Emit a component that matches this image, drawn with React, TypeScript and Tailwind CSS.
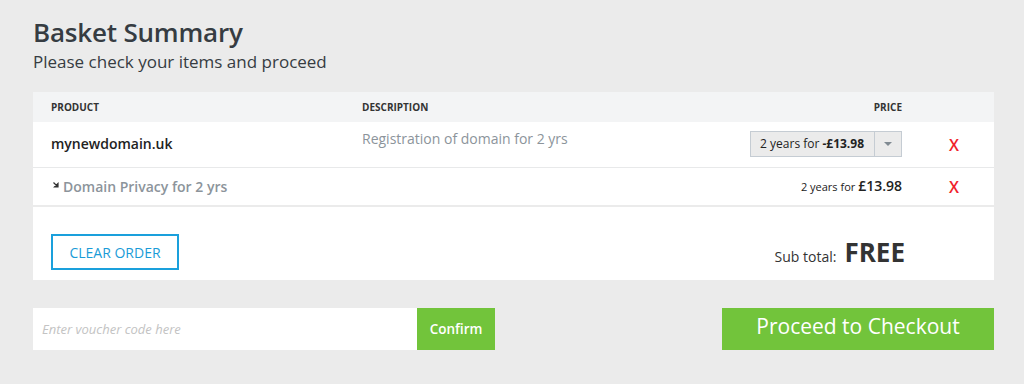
// Basket summary page

const font = { fontFamily: '"Open Sans", "Noto Sans", sans-serif' };

const RemoveX = () => (
  <span className="w-[92px] pl-[47px] text-left text-[16px] font-semibold leading-none text-[#f0222b]">X</span>
);

export default function App() {
  return (
    <div className="min-h-[384px] w-[1024px] bg-[#ebebeb] px-[33px] pt-[14px]" style={font}>
      <h1 className="text-[26px] font-semibold leading-[36px] tracking-[-0.2px] text-[#363c42]">Basket Summary</h1>
      <p className="text-[17px] leading-[24px] text-[#363c42]">Please check your items and proceed</p>

      <div className="mt-[18px] w-[961px]">
        <div className="flex h-[30px] items-center bg-[#f3f4f5] text-[10px] font-bold uppercase text-[#333]">
          <span className="w-[329px] pl-[18px]">Product</span>
          <span className="flex-1">Description</span>
          <span className="pr-[92px]">Price</span>
        </div>

        <div className="flex h-[46px] items-center border-b border-[#e8e9ea] bg-white">
          <span className="-mt-[3px] w-[329px] pl-[18px] text-[14px] font-semibold text-[#222]">mynewdomain.uk</span>
          <span className="-mt-[12px] flex-1 text-[14px] text-[#8c949b]">Registration of domain for 2 yrs</span>
          <div className="-mt-[1px] flex h-[26px] items-stretch border border-[#c5ccd3] bg-[#ebebeb] text-[12px] text-[#222]">
            <span className="flex items-center pl-[9px] pr-[10px]">
              2 years for <b className="ml-[3px] font-bold">-£13.98</b>
            </span>
            <span className="flex w-[27px] items-center justify-center border-l border-[#c5ccd3]">
              <svg width="8" height="5" viewBox="0 0 8 5"><path d="M0 0h8L4 4z" fill="#808a92" /></svg>
            </span>
          </div>
          <RemoveX />
        </div>

        <div className="flex h-[37px] items-center bg-white">
          <span className="flex flex-1 items-center pl-[20px] text-[14px] font-semibold text-[#8c949b]">
            <svg width="6" height="6" viewBox="0 0 6 6" className="-mt-[4px] mr-[4px]">
              <path d="M0.5 0.5L4.5 4.5M5 1.5V5H1.5z" stroke="#333" strokeWidth="1.2" fill="#333" />
            </svg>
            Domain Privacy for 2 yrs
          </span>
          <span className="-mt-[2px] text-[11px] text-[#222]">
            2 years for <b className="text-[14px] font-semibold">£13.98</b>
          </span>
          <RemoveX />
        </div>

        <div className="mt-[2px] flex h-[73px] items-end justify-between bg-white pb-[10px] pl-[18px] pr-[89px]">
          <button className="flex h-[36px] w-[128px] items-center justify-center border-2 border-[#1aa0dc] pt-[1px] text-[14px] text-[#1a9bd7]">
            CLEAR ORDER
          </button>
          <div className="-mb-[2px] flex items-baseline">
            <span className="text-[14px] text-[#333]">Sub total:</span>
            <span className="ml-[8px] text-[26px] font-bold text-[#333]">FREE</span>
          </div>
        </div>

        <div className="mt-[28px] flex items-start justify-between">
          <div className="flex h-[42px]">
            <input
              placeholder="Enter voucher code here"
              className="h-full w-[384px] bg-white px-[9px] text-[13px] italic text-[#333] outline-none placeholder:text-[#c3c3c3]"
            />
            <button className="h-full w-[78px] bg-[#72c43b] text-[13.5px] font-semibold text-white">Confirm</button>
          </div>
          <button className="h-[42px] w-[272px] bg-[#72c43b] pb-[4px] text-[21px] text-white">Proceed to Checkout</button>
        </div>
      </div>
    </div>
  );
}
